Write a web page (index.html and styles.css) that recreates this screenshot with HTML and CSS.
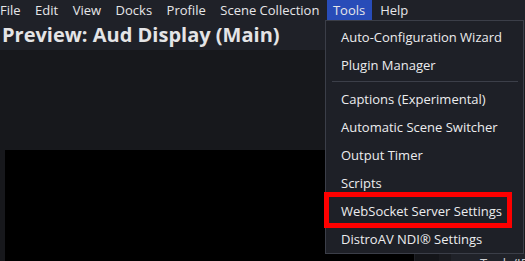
FILE: index.html
```html
<!DOCTYPE html>
<html lang="en">
<head>
  <meta charset="UTF-8">
  <title>OBS - Tools Menu</title>
  <link rel="stylesheet" href="styles.css">
</head>
<body>
  <!-- Menu bar -->
  <div class="menubar">
    <span class="menu-item">File</span>
    <span class="menu-item">Edit</span>
    <span class="menu-item">View</span>
    <span class="menu-item">Docks</span>
    <span class="menu-item">Profile</span>
    <span class="menu-item">Scene Collection</span>
    <span class="menu-item open">Tools</span>
    <span class="menu-item">Help</span>
  </div>

  <!-- Preview header -->
  <div class="header">
    <h1>Preview: Aud Display (Main)</h1>
  </div>

  <!-- Main area -->
  <div class="main">
    <div class="preview-col">
      <div class="preview"></div>
    </div>
    <div class="splitter"></div>
    <div class="dock">
      <span class="dock-title">Tools/IP</span>
    </div>
  </div>

  <!-- Tools dropdown -->
  <div class="dropdown">
    <div class="dd-item">Auto-Configuration Wizard</div>
    <div class="dd-item">Plugin Manager</div>
    <div class="dd-sep"></div>
    <div class="dd-item">Captions (Experimental)</div>
    <div class="dd-item">Automatic Scene Switcher</div>
    <div class="dd-item">Output Timer</div>
    <div class="dd-item">Scripts</div>
    <div class="dd-item">WebSocket Server Settings</div>
    <div class="dd-item">DistroAV NDI® Settings</div>
  </div>

  <!-- Annotation -->
  <div class="highlight-box"></div>
</body>
</html>
```

FILE: styles.css
```css
body {
  font-family: "Open Sans", "DejaVu Sans", sans-serif;
  margin: 0;
  padding: 0;
  width: 525px;
  height: 261px;
  overflow: hidden;
  background-color: #17181c;
  color: #e6e6e8;
  display: flex;
  flex-direction: column;
}

.menubar {
  height: 20px;
  flex: none;
  background-color: #1f2128;
  display: flex;
  align-items: stretch;
  margin-left: -7px;
  font-size: 13px;
}

.menu-item {
  padding: 0 6.5px 0 7px;
  line-height: 20px;
  margin-right: 1px;
}

.menu-item.open {
  background-color: #284cb8;
  padding: 0 7px 0 6px;
}

.header {
  height: 30px;
  flex: none;
  background-color: #1f2128;
  display: flex;
  align-items: center;
  padding-left: 2px;
}

.header h1 {
  margin: 0;
  font-size: 20px;
  line-height: 26px;
  font-weight: bold;
  color: #e4e4e6;
}

.main {
  height: 211px;
  display: flex;
  overflow: hidden;
}

.preview-col {
  width: 414px;
  padding: 100px 0 0 5px;
  box-sizing: border-box;
}

.preview {
  height: 111px;
  background-color: #000;
}

.splitter {
  width: 36px;
  border-left: 1px solid #1e2026;
  margin-top: 203px;
  background-color: #141519;
  box-shadow: inset -12px 0 0 #1a1b20;
}

.dock {
  flex: 1;
  margin-top: 203px;
  background-color: #202229;
  padding-left: 29px;
  overflow: hidden;
}

.dock-title {
  display: block;
  font-size: 13px;
  line-height: 18px;
  color: #cfd0d4;
  margin-top: 1px;
}

.dropdown {
  position: absolute;
  top: 20px;
  left: 325px;
  width: 197px;
  padding: 2px 0 0 0;
  background-color: #1e2027;
  border: 1px solid #3b3e48;
  font-size: 13px;
}

.dd-item {
  height: 28px;
  line-height: 28px;
  padding-left: 15px;
  color: #ececee;
}

.dd-sep {
  height: 1px;
  margin: 2px 5px 3px 6px;
  background-color: #3c3f49;
}

.highlight-box {
  position: absolute;
  left: 324px;
  top: 192px;
  width: 178px;
  height: 26px;
  border: 5px solid #ff0000;
}
```
